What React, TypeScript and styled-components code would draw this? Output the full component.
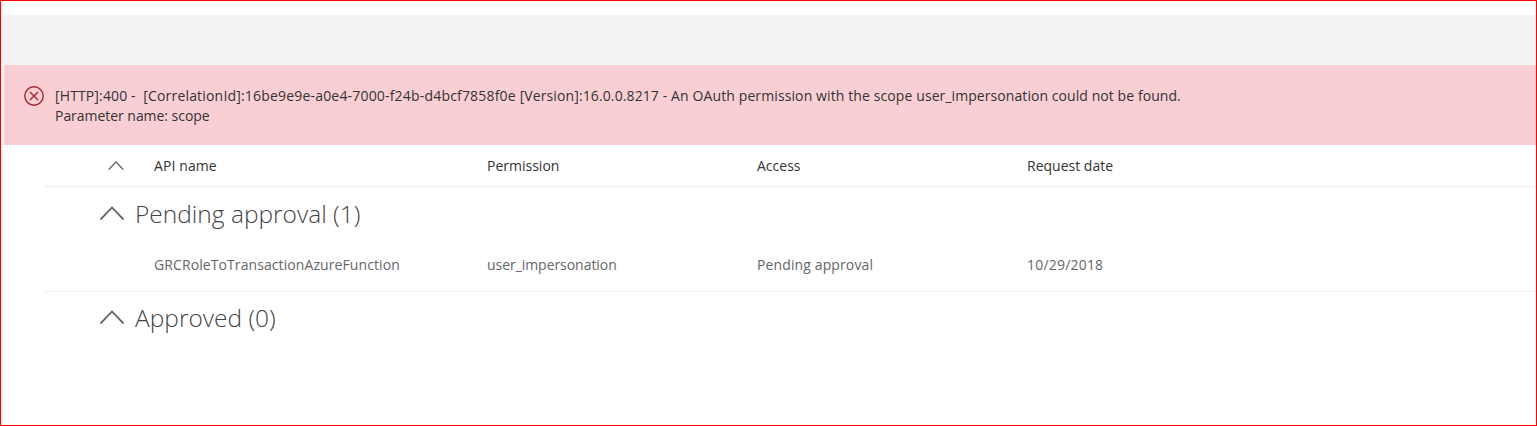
import React from "react";
import styled, { createGlobalStyle } from "styled-components";

const GlobalStyle = createGlobalStyle`
  html, body {
    margin: 0;
    padding: 0;
    background: #fff;
  }
  body {
    font-family: "Open Sans", "Noto Sans", sans-serif;
  }
`;

const Frame = styled.div`
  box-sizing: border-box;
  width: 1537px;
  height: 426px;
  border: 1px solid #ff0000;
  overflow: hidden;
  display: flex;
`;

const Gutter = styled.div`
  width: 3px;
  flex: none;
  background: #f4f4f4;
`;

const Page = styled.div`
  flex: 1;
  min-width: 0;
  padding-top: 14px;
`;

const TopBar = styled.div`
  height: 50px;
  background: #f3f3f3;
`;

const ErrorBanner = styled.div`
  height: 80px;
  box-sizing: border-box;
  background: #f9cfd4;
  padding: 21px 0 0 20px;
  display: flex;
  gap: 11px;
  color: #333;
  font-size: 14px;
  line-height: 20px;
`;

const ErrorIcon = styled.svg`
  width: 20px;
  height: 20px;
  flex: none;
`;

const ErrorText = styled.span<{ $spacing: number }>`
  letter-spacing: ${(p) => p.$spacing}px;
`;

const ErrorDetail = styled.div`
  letter-spacing: -0.04px;
`;

const Content = styled.div`
  padding-left: 40px;
`;

const Row = styled.div<{ $muted?: boolean; $height: number }>`
  display: grid;
  grid-template-columns: 110px 333px 270px 270px 1fr;
  align-items: center;
  height: ${(p) => p.$height}px;
  font-size: 14px;
  color: ${(p) => (p.$muted ? "#666" : "#333")};
  border-bottom: 1px solid #eeeeee;
`;

const ItemRow = styled(Row)`
  padding-bottom: 2px;
`;

const SortCell = styled.div`
  display: flex;
  padding-left: 64px;
`;

const Cell = styled.div<{ $spacing?: number }>`
  letter-spacing: ${(p) => p.$spacing ?? 0}px;
`;

const GroupHeader = styled.div<{ $height: number }>`
  display: flex;
  align-items: center;
  gap: 11px;
  height: ${(p) => p.$height}px;
  padding-left: 56px;
  font-size: 24.5px;
  font-weight: 300;
  color: #444;
`;

const Chevron = ({ size }: { size: number }) => (
  <svg
    width={size}
    height={Math.round(size * 0.58)}
    viewBox="0 0 24 14"
    fill="none"
    stroke="#5f5f5f"
    strokeWidth={size > 20 ? 1.8 : 1.9}
  >
    <path d="M0.5 13.5 L12 1.5 L23.5 13.5" />
  </svg>
);

export default function App() {
  return (
    <>
      <GlobalStyle />
      <Frame>
        <Gutter />
        <Page>
          <TopBar />
          <ErrorBanner>
            <ErrorIcon viewBox="0 0 20 20" fill="none" stroke="#a4262c" strokeWidth={1.4}>
              <circle cx="10" cy="10" r="9.2" />
              <path d="M6 6 L14 14 M14 6 L6 14" />
            </ErrorIcon>
            <div>
              <div>
                <ErrorText $spacing={0.125}>[HTTP]:400 -&nbsp; </ErrorText>
                <ErrorText $spacing={0.185}>[CorrelationId]:16be9e9e-a0e4-7000-f24b-d4bcf7858f0e </ErrorText>
                <ErrorText $spacing={0.11}>[Version]:16.0.0.8217 - An OAuth permission with the scope </ErrorText>
                <ErrorText $spacing={0.07}>user_impersonation could not be found.</ErrorText>
              </div>
              <ErrorDetail>Parameter name: scope</ErrorDetail>
            </div>
          </ErrorBanner>
          <Content>
            <Row $height={41}>
              <SortCell>
                <Chevron size={16} />
              </SortCell>
              <Cell $spacing={0.1}>API name</Cell>
              <Cell>Permission</Cell>
              <Cell>Access</Cell>
              <Cell>Request date</Cell>
            </Row>
            <GroupHeader $height={52}>
              <Chevron size={24} />
              Pending approval (1)
            </GroupHeader>
            <ItemRow $muted $height={50}>
              <div />
              <Cell $spacing={0.09}>GRCRoleToTransactionAzureFunction</Cell>
              <Cell $spacing={-0.05}>user_impersonation</Cell>
              <Cell $spacing={0.12}>Pending approval</Cell>
              <Cell $spacing={0.2}>10/29/2018</Cell>
            </ItemRow>
            <GroupHeader $height={50}>
              <Chevron size={24} />
              Approved (0)
            </GroupHeader>
          </Content>
        </Page>
      </Frame>
    </>
  );
}
